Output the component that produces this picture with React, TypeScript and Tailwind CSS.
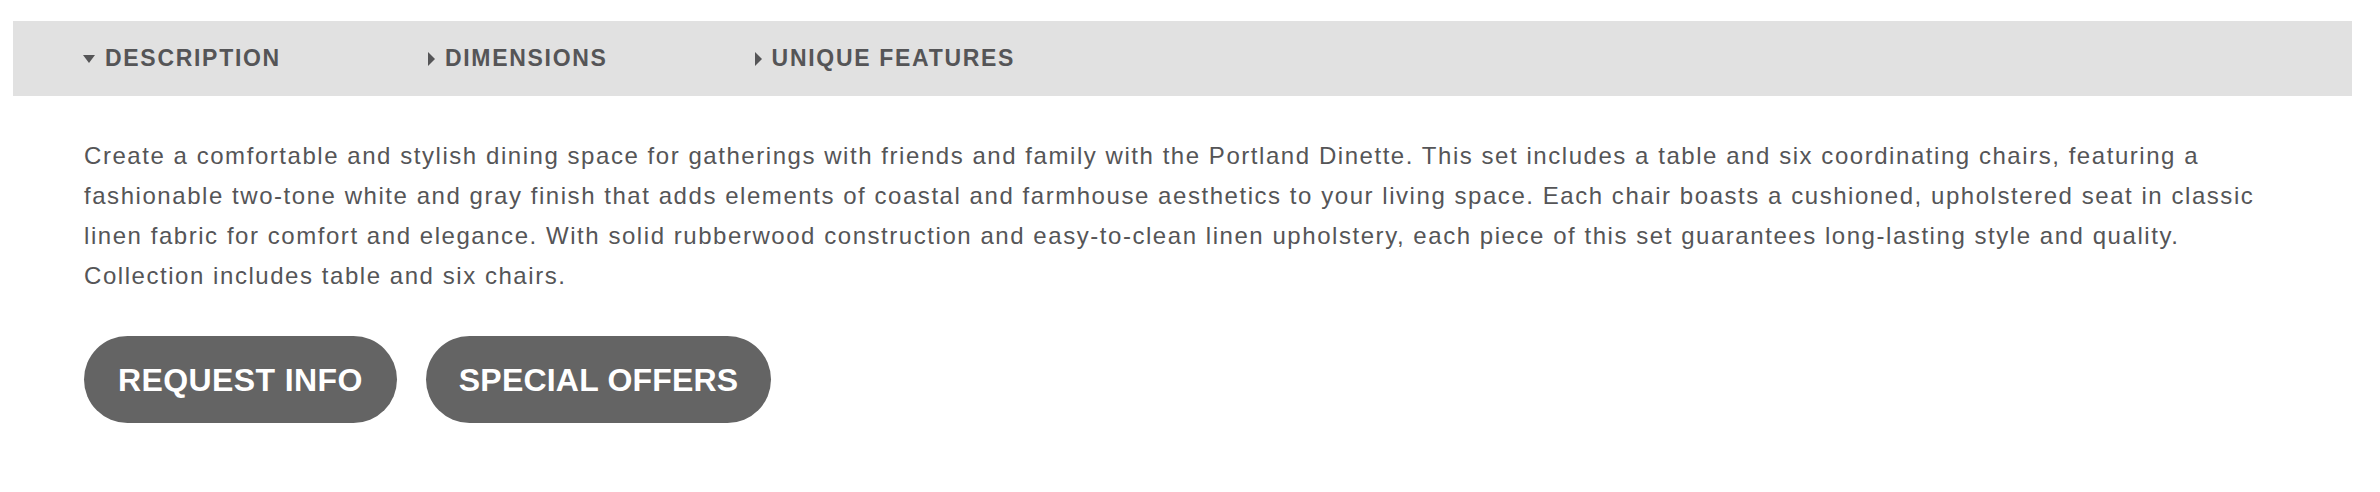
import { useState } from "react";

const tabs = ["DESCRIPTION", "DIMENSIONS", "UNIQUE FEATURES"];

const lines = [
  "Create a comfortable and stylish dining space for gatherings with friends and family with the Portland Dinette. This set includes a table and six coordinating chairs, featuring a",
  "fashionable two-tone white and gray finish that adds elements of coastal and farmhouse aesthetics to your living space. Each chair boasts a cushioned, upholstered seat in classic",
  "linen fabric for comfort and elegance. With solid rubberwood construction and easy-to-clean linen upholstery, each piece of this set guarantees long-lasting style and quality.",
  "Collection includes table and six chairs.",
];

function Caret({ open }: { open: boolean }) {
  return open ? (
    <svg width="12" height="8" viewBox="0 0 12 8" className="shrink-0">
      <path d="M0 0h12L6 8z" fill="currentColor" />
    </svg>
  ) : (
    <svg width="7" height="14" viewBox="0 0 7 14" className="shrink-0">
      <path d="M0 0l7 7-7 7z" fill="currentColor" />
    </svg>
  );
}

export default function App() {
  const [active, setActive] = useState(0);

  return (
    <div className="min-h-screen bg-white pt-[21px] font-['Liberation_Sans',Arial,sans-serif] text-[#555557]">
      <div className="ml-[13px] w-[2339px]">
        <div className="flex h-[75px] items-center bg-[#e1e1e1] px-[70px]">
          {tabs.map((tab, i) => (
            <button
              key={tab}
              type="button"
              onClick={() => setActive(i)}
              className="mr-[147px] flex items-center gap-[10px] text-[23px] font-bold tracking-[1.7px] text-[#555557]"
            >
              <Caret open={active === i} />
              <span>{tab}</span>
            </button>
          ))}
        </div>

        <div className="px-[71px] pt-[40px]">
          <p className="whitespace-nowrap text-[24px] leading-[40px] tracking-[1.55px]">
            {lines.map((line, i) => (
              <span key={i} className="block">
                {line}
              </span>
            ))}
          </p>

          <div className="mt-[40px] flex gap-[29px]">
            <button
              type="button"
              className="flex h-[87px] items-center rounded-full bg-[#646464] px-[34px] text-[32px] font-bold tracking-[0.4px] text-white"
            >
              REQUEST INFO
            </button>
            <button
              type="button"
              className="flex h-[87px] items-center rounded-full bg-[#646464] px-[33px] text-[32px] font-bold tracking-[0.2px] text-white"
            >
              SPECIAL OFFERS
            </button>
          </div>
        </div>
      </div>
    </div>
  );
}
